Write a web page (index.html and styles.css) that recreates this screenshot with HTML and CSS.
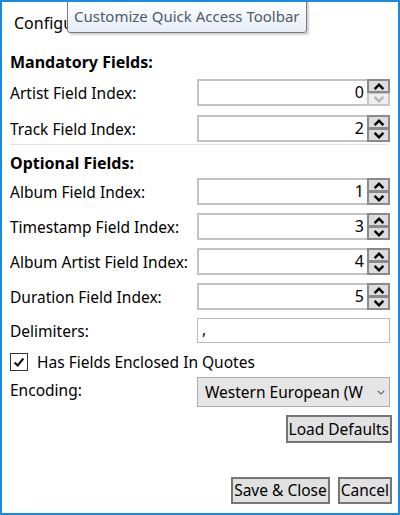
FILE: index.html
```html
<!DOCTYPE html>
<html>
<head>
<meta charset="utf-8">
<link rel="stylesheet" href="styles.css">
</head>
<body>
<div class="window">
  <div class="title">Configuration</div>
  <div class="tooltip">Customize Quick Access Toolbar</div>

  <div class="section">Mandatory Fields:</div>
  <div class="rows rows-a">
    <div class="row">
      <span class="label">Artist Field Index:</span>
      <div class="spin">
        <div class="box">0</div>
        <div class="btns">
          <div class="btn"><svg viewBox="0 0 12 8" class="arr"><path d="M1 7 L6 2 L11 7" /></svg></div>
          <div class="btn off"><svg viewBox="0 0 12 8" class="arr"><path d="M1 1 L6 6 L11 1" /></svg></div>
        </div>
      </div>
    </div>
    <div class="row">
      <span class="label">Track Field Index:</span>
      <div class="spin">
        <div class="box">2</div>
        <div class="btns">
          <div class="btn"><svg viewBox="0 0 12 8" class="arr"><path d="M1 7 L6 2 L11 7" /></svg></div>
          <div class="btn"><svg viewBox="0 0 12 8" class="arr"><path d="M1 1 L6 6 L11 1" /></svg></div>
        </div>
      </div>
    </div>
  </div>

  <div class="sep"></div>

  <div class="section sec2">Optional Fields:</div>
  <div class="rows rows-b">
    <div class="row">
      <span class="label">Album Field Index:</span>
      <div class="spin">
        <div class="box">1</div>
        <div class="btns">
          <div class="btn"><svg viewBox="0 0 12 8" class="arr"><path d="M1 7 L6 2 L11 7" /></svg></div>
          <div class="btn"><svg viewBox="0 0 12 8" class="arr"><path d="M1 1 L6 6 L11 1" /></svg></div>
        </div>
      </div>
    </div>
    <div class="row">
      <span class="label">Timestamp Field Index:</span>
      <div class="spin">
        <div class="box">3</div>
        <div class="btns">
          <div class="btn"><svg viewBox="0 0 12 8" class="arr"><path d="M1 7 L6 2 L11 7" /></svg></div>
          <div class="btn"><svg viewBox="0 0 12 8" class="arr"><path d="M1 1 L6 6 L11 1" /></svg></div>
        </div>
      </div>
    </div>
    <div class="row">
      <span class="label">Album Artist Field Index:</span>
      <div class="spin">
        <div class="box">4</div>
        <div class="btns">
          <div class="btn"><svg viewBox="0 0 12 8" class="arr"><path d="M1 7 L6 2 L11 7" /></svg></div>
          <div class="btn"><svg viewBox="0 0 12 8" class="arr"><path d="M1 1 L6 6 L11 1" /></svg></div>
        </div>
      </div>
    </div>
    <div class="row">
      <span class="label">Duration Field Index:</span>
      <div class="spin">
        <div class="box">5</div>
        <div class="btns">
          <div class="btn"><svg viewBox="0 0 12 8" class="arr"><path d="M1 7 L6 2 L11 7" /></svg></div>
          <div class="btn"><svg viewBox="0 0 12 8" class="arr"><path d="M1 1 L6 6 L11 1" /></svg></div>
        </div>
      </div>
    </div>
    <div class="row delim-row">
      <span class="label lab-top lab-delim">Delimiters:</span>
      <div class="text">,</div>
    </div>
  </div>

  <div class="check-row">
    <span class="check"><svg viewBox="0 0 16 16" class="tick"><path d="M3 8.5 L6.5 12 L13 4" /></svg></span>
    <span class="check-label">Has Fields Enclosed In Quotes</span>
  </div>

  <div class="row enc-row">
    <span class="label lab-top lab-enc">Encoding:</span>
    <div class="combo"><span class="combo-text">Western European (W</span><svg viewBox="0 0 10 6" class="chev"><path d="M1 1 L5 5 L9 1" /></svg></div>
  </div>

  <div class="actions-a">
    <div class="button">Load Defaults</div>
  </div>
  <div class="actions-b">
    <div class="button">Save &amp; Close</div>
    <div class="button">Cancel</div>
  </div>
</div>
</body>
</html>
```

FILE: styles.css
```css
html, body {
  margin: 0;
  padding: 0;
  background: #ffffff;
}

.window {
  position: relative;
  box-sizing: border-box;
  width: 400px;
  height: 515px;
  border: 2px solid #1a8ae8;
  background: #ffffff;
  padding: 0 8px 0 8px;
  font-family: "Noto Sans", "Open Sans", sans-serif;
  font-size: 15.5px;
  color: #000;
  overflow: hidden;
}

.title {
  margin-left: 4px;
  padding-top: 10px;
  height: 28px;
  line-height: 22px;
  font-size: 16px;
}

.tooltip {
  position: absolute;
  left: 65px;
  top: -3px;
  width: 240px;
  height: 34px;
  padding-left: 6px;
  padding-top: 4px;
  box-sizing: border-box;
  border: 1px solid #7a7a7a;
  border-radius: 3px;
  background: linear-gradient(#ffffff, #e6edf6);
  box-shadow: 2px 2px 2px rgba(0,0,0,0.18);
  color: #4f5a66;
  font-size: 15px;
  line-height: 24px;
  white-space: nowrap;
}

.section {
  font-weight: bold;
  font-size: 16px;
  line-height: 20px;
  margin-top: 12px;
}

.rows {
  display: flex;
  flex-direction: column;
}

.rows-a {
  margin-top: 7px;
  gap: 9px;
}

.rows-b {
  margin-top: 5px;
  gap: 8px;
}

.row {
  display: flex;
  align-items: center;
  height: 27px;
}

.label {
  width: 187px;
  flex: none;
  white-space: nowrap;
  line-height: 20px;
}

.lab-top {
  align-self: flex-start;
}

.lab-delim {
  margin-top: 3px;
}

.spin {
  display: flex;
  width: 193px;
  height: 27px;
}

.box {
  flex: 1;
  box-sizing: border-box;
  border: 2px solid #c3c3c3;
  border-right: none;
  text-align: right;
  padding-right: 3px;
  line-height: 23px;
  font-size: 16px;
}

.btns {
  display: flex;
  flex-direction: column;
  width: 23px;
}

.btn {
  flex: 1;
  box-sizing: border-box;
  border: 2px solid #8a8a8a;
  background: #dcdcdc;
  display: flex;
  align-items: center;
  justify-content: center;
}

.btn + .btn {
  border-top-width: 1px;
}

.btn.off {
  border-color: #c8c8c8;
  background: #efefef;
}

.arr {
  width: 12px;
  height: 7px;
  fill: none;
  stroke: #000;
  stroke-width: 2.8;
}

.btn.off .arr {
  stroke: #b5b5b5;
}

.sep {
  height: 1px;
  background: #e3e3e3;
  margin-top: 2px;
  margin-right: 2px;
}

.sec2 {
  margin-top: 8px;
}

.delim-row {
  height: 25px;
}

.text {
  width: 195px;
  height: 25px;
  box-sizing: border-box;
  border: 1px solid #b8b8b8;
  padding-left: 4px;
  line-height: 20px;
  align-self: flex-start;
}

.check-row {
  display: flex;
  align-items: center;
  margin-top: 10px;
  height: 18px;
}

.check {
  width: 18px;
  height: 18px;
  box-sizing: border-box;
  border: 1px solid #333;
  background: #fff;
  display: flex;
  align-items: center;
  justify-content: center;
}

.tick {
  width: 14px;
  height: 14px;
  fill: none;
  stroke: #111;
  stroke-width: 2.4;
}

.check-label {
  margin-left: 9px;
  line-height: 20px;
}

.enc-row {
  margin-top: 6px;
  height: 30px;
}

.lab-enc {
  margin-top: 3px;
}

.combo {
  width: 195px;
  height: 30px;
  box-sizing: border-box;
  border: 1px solid #adadad;
  background: #e5e5e5;
  display: flex;
  align-items: center;
  padding-left: 7px;
  overflow: hidden;
}

.combo-text {
  white-space: nowrap;
  flex: none;
  width: 164px;
  overflow: hidden;
  font-size: 15.5px;
}

.chev {
  width: 8px;
  height: 5px;
  margin-left: 8px;
  fill: none;
  stroke: #555;
  stroke-width: 1.3;
}

.actions-a {
  display: flex;
  justify-content: flex-end;
  margin-top: 8px;
  margin-right: -2px;
}

.actions-b {
  display: flex;
  justify-content: flex-end;
  gap: 8px;
  margin-top: 34px;
  margin-right: -2px;
}

.button {
  box-sizing: border-box;
  height: 28px;
  border: 2px solid #767676;
  background: #e1e1e1;
  padding: 0 1px;
  line-height: 24px;
  font-size: 15.5px;
  white-space: nowrap;
}

.actions-b .button {
  height: 27px;
  line-height: 23px;
}
```
